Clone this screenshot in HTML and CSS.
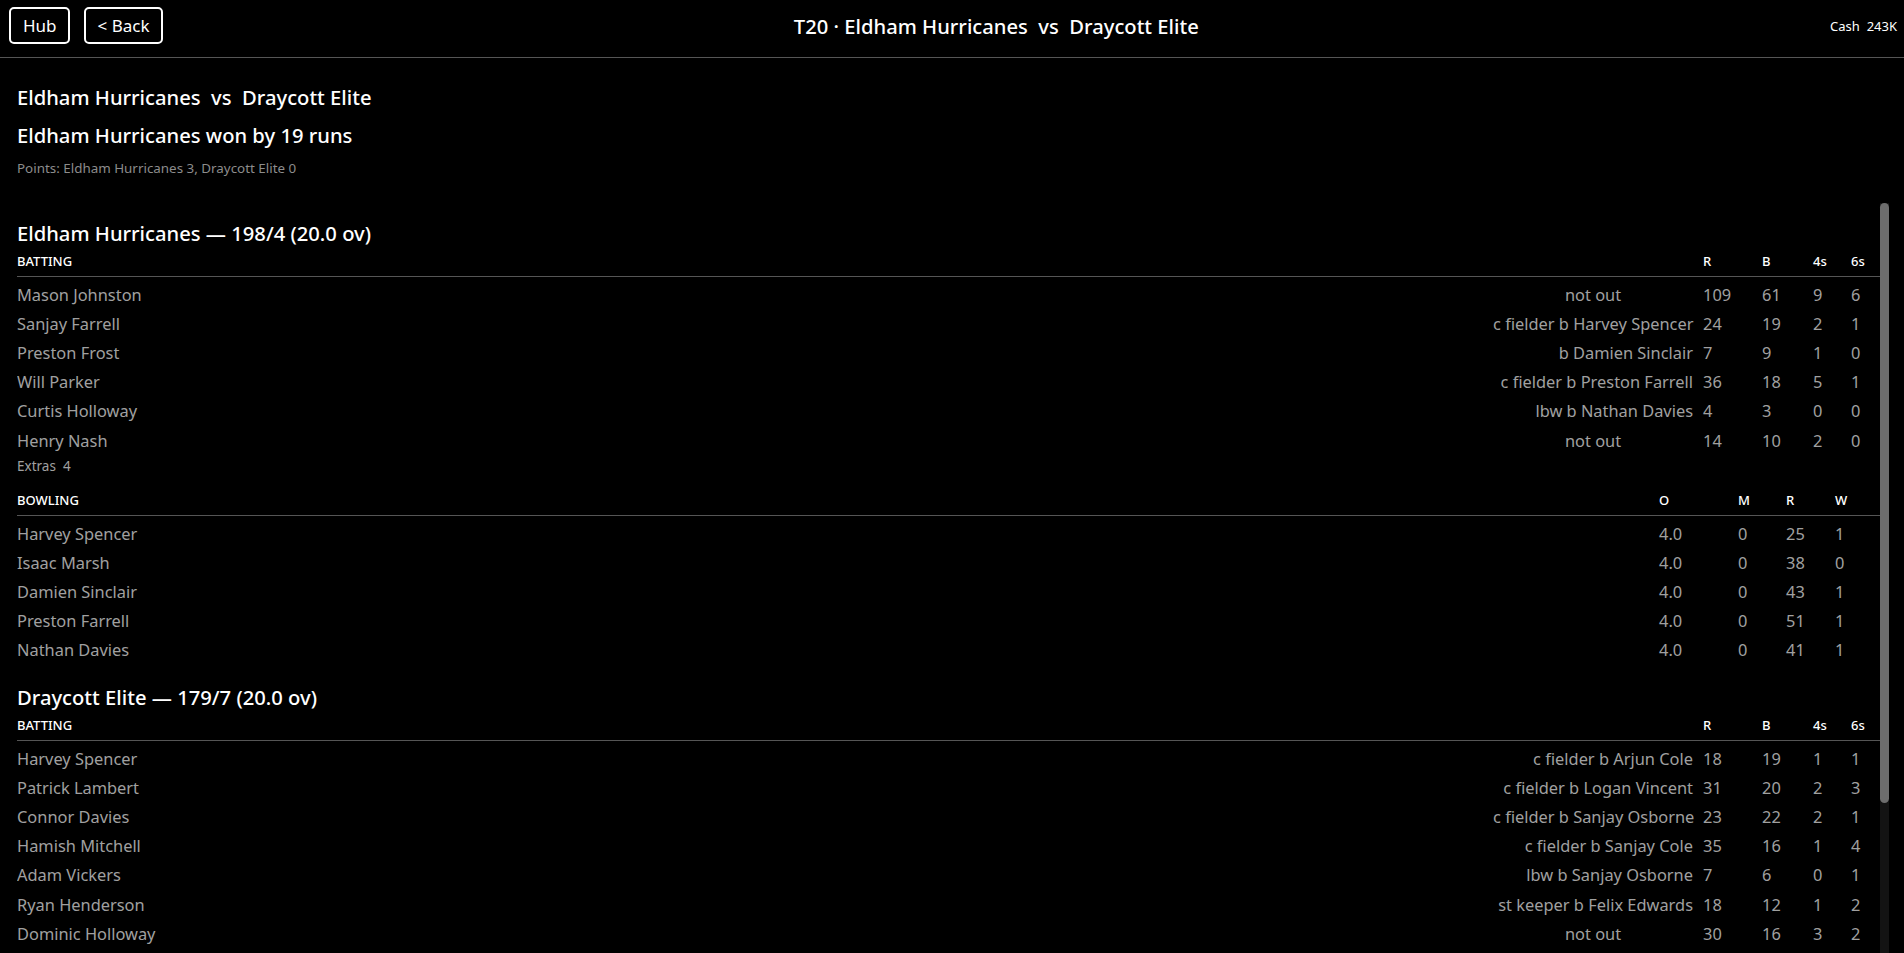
FILE: index.html
```html
<!DOCTYPE html>
<html lang="en">
<head>
<meta charset="utf-8">
<title>T20 · Eldham Hurricanes vs Draycott Elite</title>
<link rel="stylesheet" href="styles.css">
</head>
<body>
<div class="app">
  <header class="topbar">
    <div class="nav">
      <button class="btn">Hub</button>
      <button class="btn">&lt; Back</button>
    </div>
    <div class="title">T20 · Eldham Hurricanes &nbsp;vs&nbsp; Draycott Elite</div>
    <div class="cash">Cash &nbsp;243K</div>
  </header>

  <main class="main">
    <section class="summary">
      <h1 class="match">Eldham Hurricanes &nbsp;vs&nbsp; Draycott Elite</h1>
      <h2 class="result">Eldham Hurricanes won by 19 runs</h2>
      <p class="points">Points: Eldham Hurricanes 3, Draycott Elite 0</p>
    </section>

    <div class="scroll">
      <div class="scroll-content">
        <section class="innings">
          <h3 class="inn-title">Eldham Hurricanes — 198/4 (20.0 ov)</h3>
          <div class="bat head"><span>BATTING</span><span></span><span>R</span><span>B</span><span>4s</span><span>6s</span></div>
          <div class="rows">
            <div class="bat"><span>Mason Johnston</span><span class="dis no">not out</span><span>109</span><span>61</span><span>9</span><span>6</span></div>
            <div class="bat"><span>Sanjay Farrell</span><span class="dis">c fielder b Harvey Spencer</span><span>24</span><span>19</span><span>2</span><span>1</span></div>
            <div class="bat"><span>Preston Frost</span><span class="dis">b Damien Sinclair</span><span>7</span><span>9</span><span>1</span><span>0</span></div>
            <div class="bat"><span>Will Parker</span><span class="dis">c fielder b Preston Farrell</span><span>36</span><span>18</span><span>5</span><span>1</span></div>
            <div class="bat"><span>Curtis Holloway</span><span class="dis">lbw b Nathan Davies</span><span>4</span><span>3</span><span>0</span><span>0</span></div>
            <div class="bat"><span>Henry Nash</span><span class="dis no">not out</span><span>14</span><span>10</span><span>2</span><span>0</span></div>
          </div>
          <div class="extras">Extras &nbsp;4</div>
          <div class="bowl head"><span>BOWLING</span><span>O</span><span>M</span><span>R</span><span>W</span></div>
          <div class="rows">
            <div class="bowl"><span>Harvey Spencer</span><span>4.0</span><span>0</span><span>25</span><span>1</span></div>
            <div class="bowl"><span>Isaac Marsh</span><span>4.0</span><span>0</span><span>38</span><span>0</span></div>
            <div class="bowl"><span>Damien Sinclair</span><span>4.0</span><span>0</span><span>43</span><span>1</span></div>
            <div class="bowl"><span>Preston Farrell</span><span>4.0</span><span>0</span><span>51</span><span>1</span></div>
            <div class="bowl"><span>Nathan Davies</span><span>4.0</span><span>0</span><span>41</span><span>1</span></div>
          </div>
        </section>

        <section class="innings">
          <h3 class="inn-title">Draycott Elite — 179/7 (20.0 ov)</h3>
          <div class="bat head"><span>BATTING</span><span></span><span>R</span><span>B</span><span>4s</span><span>6s</span></div>
          <div class="rows">
            <div class="bat"><span>Harvey Spencer</span><span class="dis">c fielder b Arjun Cole</span><span>18</span><span>19</span><span>1</span><span>1</span></div>
            <div class="bat"><span>Patrick Lambert</span><span class="dis">c fielder b Logan Vincent</span><span>31</span><span>20</span><span>2</span><span>3</span></div>
            <div class="bat"><span>Connor Davies</span><span class="dis">c fielder b Sanjay Osborne</span><span>23</span><span>22</span><span>2</span><span>1</span></div>
            <div class="bat"><span>Hamish Mitchell</span><span class="dis">c fielder b Sanjay Cole</span><span>35</span><span>16</span><span>1</span><span>4</span></div>
            <div class="bat"><span>Adam Vickers</span><span class="dis">lbw b Sanjay Osborne</span><span>7</span><span>6</span><span>0</span><span>1</span></div>
            <div class="bat"><span>Ryan Henderson</span><span class="dis">st keeper b Felix Edwards</span><span>18</span><span>12</span><span>1</span><span>2</span></div>
            <div class="bat"><span>Dominic Holloway</span><span class="dis no">not out</span><span>30</span><span>16</span><span>3</span><span>2</span></div>
          </div>
        </section>
      </div>
      <div class="scrollbar"><div class="thumb"></div></div>
    </div>
  </main>
</div>
</body>
</html>
```

FILE: styles.css
```css
* { box-sizing: border-box; }

html, body {
  margin: 0;
  height: 100%;
  background: #000;
  color: #fff;
  font-family: "Noto Sans", "Open Sans", sans-serif;
  overflow: hidden;
}

.app {
  height: 100vh;
  display: flex;
  flex-direction: column;
}

.topbar {
  flex: none;
  height: 58px;
  padding: 7px 7px 13px 9px;
  border-bottom: 1px solid #555;
  display: flex;
  align-items: center;
}

.nav {
  display: flex;
  gap: 14px;
}

.btn {
  height: 37px;
  padding: 0 11px 0 12px;
  background: transparent;
  color: #fff;
  border: 2px solid #fff;
  border-radius: 5px;
  font-family: inherit;
  font-size: 17px;
  line-height: 1;
}

.title {
  flex: 1;
  text-align: center;
  font-size: 20.2px;
  font-weight: 500;
}

.cash {
  font-size: 13px;
}

.main {
  flex: 1;
  min-height: 0;
  display: flex;
  flex-direction: column;
  padding: 0 15px 0 17px;
}

.summary {
  flex: none;
  padding-top: 25px;
  height: 145px;
}

.match, .result {
  margin: 0;
  font-size: 20.2px;
  line-height: 28px;
  font-weight: 500;
}

.result { margin-top: 10px; }

.points {
  margin: 10px 0 0;
  font-size: 13.4px;
  line-height: 18px;
  color: #8c8c8c;
}

.scroll {
  flex: 1;
  min-height: 0;
  display: flex;
}

.scroll-content {
  flex: 1;
  min-width: 0;
  overflow: hidden;
}

.scrollbar {
  flex: none;
  width: 9px;
  background: #131313;
}

.thumb {
  height: 600px;
  background: #6d6d6d;
  border-radius: 5px;
}

.innings { padding-top: 16px; }
.innings + .innings { padding-top: 19px; }

.inn-title {
  margin: 0 0 6px;
  font-size: 20.2px;
  line-height: 28px;
  font-weight: 500;
}

.bat, .bowl {
  display: grid;
  align-items: center;
}

.bat { grid-template-columns: 1fr 210px 59px 51px 38px 29px; }
.bowl { grid-template-columns: 1fr 79px 48px 49px 45px; }

.head {
  font-size: 13px;
  line-height: 17px;
  font-weight: 500;
  color: #fff;
  padding-bottom: 6px;
  border-bottom: 1px solid #555;
}

.rows { padding-top: 3px; }

.rows .bat, .rows .bowl {
  height: 29.1px;
  font-size: 16.4px;
  color: #a0a0a0;
}

.dis {
  text-align: right;
  padding-right: 10px;
  white-space: nowrap;
}

.dis.no {
  text-align: center;
}

.extras {
  margin-top: 3px;
  font-size: 13.5px;
  line-height: 17px;
  color: #a0a0a0;
  margin-bottom: 17px;
}
```
